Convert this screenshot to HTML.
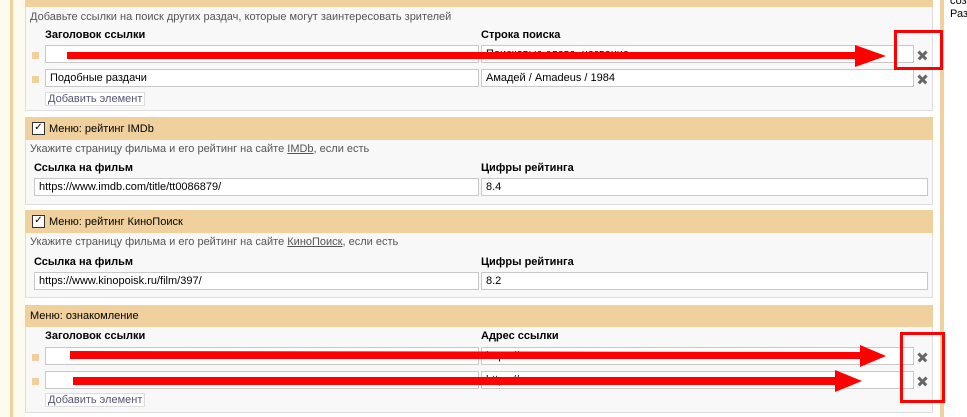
<!DOCTYPE html>
<html><head><meta charset="utf-8"><style>
body{margin:0;width:967px;height:417px;overflow:hidden;background:#fff;font-family:"Liberation Sans",sans-serif;font-size:11px;color:#000;position:relative}
.a{position:absolute}
.pan{position:absolute;left:25px;width:908px;background:#f8f8f8;border:1px solid #ddd;box-sizing:border-box}
.hd{position:absolute;left:25px;width:908px;background:#f0d09c}
.in{position:absolute;height:18px;border:1px solid #c8c8c8;background:#fff;box-sizing:border-box;font-size:11px;line-height:16px;padding-left:4px;white-space:nowrap;overflow:hidden}
.lb{position:absolute;font-weight:bold;font-size:11px}
.gr{position:absolute;color:#555;font-size:11px}
.sq{position:absolute;width:7px;height:7px;background:#f0d09c;left:32px}
.x{position:absolute;left:918px;width:9px;height:9px}
.x:before,.x:after{content:"";position:absolute;left:-1px;top:3px;width:11px;height:2.5px;background:#666;transform:rotate(45deg)}
.x:after{transform:rotate(-45deg)}
.btn{position:absolute;left:45px;height:14px;border:1px solid #ddd;background:#fff;color:#557;font-size:11px;line-height:13px;padding:0 2px;box-sizing:border-box}
.cb{position:absolute;left:32px;width:11px;height:11px;border:1px solid #333;background:#fff;font-size:10px;line-height:10px;text-align:center}
</style></head><body>
<div class="a" style="left:0;top:0;width:10px;height:417px;background:#fdfaee"></div>
<div class="a" style="left:10px;top:0;width:3px;height:417px;background:#f0d09c"></div>
<div class="a" style="left:13px;top:0;width:12px;height:417px;background:#fdfaee"></div>
<div class="a" style="left:940px;top:0;width:4px;height:417px;background:#f0d09c"></div>
<div class="a" style="left:950px;top:-5px;font-size:11px;line-height:13px">соз<br>Раз</div>

<div class="pan" style="top:0;height:111px"></div>
<div class="hd" style="top:0;height:7px"></div>
<div class="gr" style="left:30px;top:11px">Добавьте ссылки на поиск других раздач, которые могут заинтересовать зрителей</div>
<div class="lb" style="left:45px;top:29px">Заголовок ссылки</div>
<div class="lb" style="left:481px;top:29px">Строка поиска</div>
<div class="sq" style="top:52px"></div><div class="in" style="left:45px;top:45px;width:434px"></div><div class="in" style="left:481px;top:45px;width:433px">Поисковые слова, название</div><div class="x" style="top:51px"></div>
<div class="sq" style="top:76px"></div><div class="in" style="left:45px;top:69px;width:434px">Подобные раздачи</div><div class="in" style="left:481px;top:69px;width:433px">Амадей / Amadeus / 1984</div><div class="x" style="top:75px"></div>
<div class="btn" style="top:92px">Добавить элемент</div>

<div class="pan" style="top:117px;height:88px"></div>
<div class="hd" style="top:117px;height:23px"></div>
<div class="cb" style="top:122px">✓</div>
<div class="a" style="left:49px;top:123px">Меню: рейтинг IMDb</div>
<div class="gr" style="left:30px;top:143px">Укажите страницу фильма и его рейтинг на сайте <u>IMDb</u>, если есть</div>
<div class="lb" style="left:34px;top:162px">Ссылка на фильм</div>
<div class="lb" style="left:481px;top:162px">Цифры рейтинга</div>
<div class="in" style="left:34px;top:178px;width:445px">https://www.imdb.com/title/tt0086879/</div>
<div class="in" style="left:481px;top:178px;width:447px">8.4</div>

<div class="pan" style="top:210px;height:88px"></div>
<div class="hd" style="top:210px;height:23px"></div>
<div class="cb" style="top:215px">✓</div>
<div class="a" style="left:49px;top:216px">Меню: рейтинг КиноПоиск</div>
<div class="gr" style="left:30px;top:236px">Укажите страницу фильма и его рейтинг на сайте <u>КиноПоиск</u>, если есть</div>
<div class="lb" style="left:34px;top:256px">Ссылка на фильм</div>
<div class="lb" style="left:481px;top:256px">Цифры рейтинга</div>
<div class="in" style="left:34px;top:272px;width:445px">https://www.kinopoisk.ru/film/397/</div>
<div class="in" style="left:481px;top:272px;width:447px">8.2</div>

<div class="pan" style="top:305px;height:108px"></div>
<div class="hd" style="top:305px;height:22px"></div>
<div class="a" style="left:30px;top:310px">Меню: ознакомление</div>
<div class="lb" style="left:45px;top:330px">Заголовок ссылки</div>
<div class="lb" style="left:481px;top:330px">Адрес ссылки</div>
<div class="sq" style="top:354px"></div><div class="in" style="left:45px;top:347px;width:434px"></div><div class="in" style="left:481px;top:347px;width:433px">https://ссылка</div><div class="x" style="top:353px"></div>
<div class="sq" style="top:378px"></div><div class="in" style="left:45px;top:371px;width:434px"></div><div class="in" style="left:481px;top:371px;width:433px">https://ссылка</div><div class="x" style="top:377px"></div>
<div class="btn" style="top:393px">Добавить элемент</div>

<svg class="a" style="left:0;top:0" width="967" height="417">
<g fill="#f00" stroke="none">
<path d="M67 52 L855 52 L855 45 L886 56 L855 67 L855 59 L67 59 Z"/>
<path d="M70 351 L860 352 L860 345 L886 356 L860 367 L860 359 L70 359 Z"/>
<path d="M73 377 L835 377 L835 370 L862 381 L835 392 L835 385 L73 385 Z"/>
</g>
<g fill="none" stroke="#f00" stroke-width="3">
<rect x="895.5" y="31.5" width="46" height="37"/>
<rect x="901.5" y="333.5" width="42" height="68"/>
</g>
</svg>
</body></html>
